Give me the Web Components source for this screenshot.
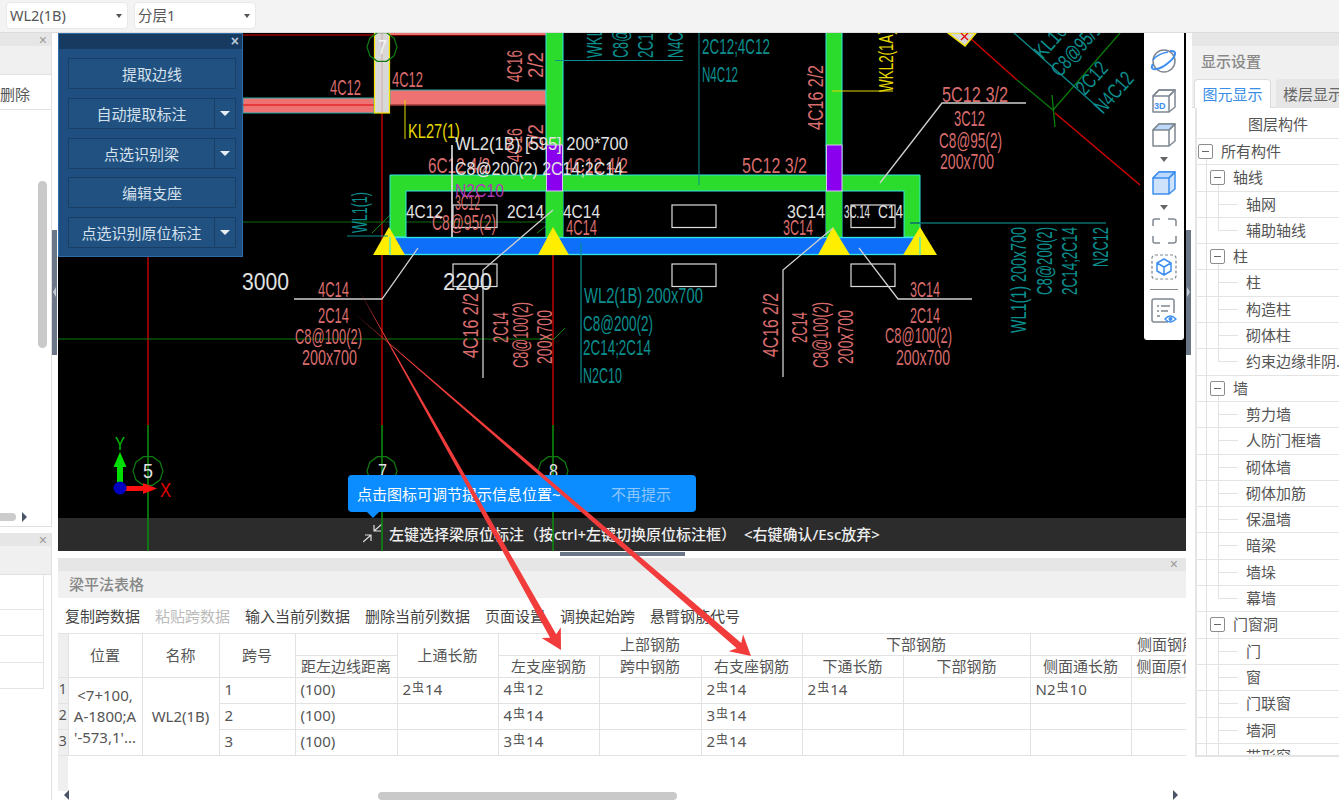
<!DOCTYPE html>
<html lang="zh">
<head>
<meta charset="utf-8">
<title>梁平法表格</title>
<style>
  html, body { margin: 0; height: 100%; overflow: hidden; background: #fff; }
  body { font: 15px/20px "Noto Sans", "Noto Sans CJK SC", sans-serif; color: #555; }
</style>
</head>
<body>
<gl-app></gl-app>
<script>
// small base: every element just sets its shadow markup from render()
class GlElement extends HTMLElement {
  constructor() {
    super();
    this.attachShadow({mode: 'open'});
    this.shadowRoot.innerHTML = this.render();
  }
}

class GlApp extends GlElement {
  render() {
    return `
      <style>
        :host { display: grid; position: relative; width: 1339px; height: 800px; overflow: hidden;
                grid-template-columns: 52px 6px 1128px 6px 147px; grid-template-rows: 33px 518px 7px 242px; }
        gl-toolbar { grid-column: 1 / -1; }
        gl-left-rail { grid-column: 1; grid-row: 2 / 5; }
        .split { grid-row: 2 / 5; position: relative; background: #fff; }
        .split i { display: block; position: absolute; left: 0; top: 197px; width: 5px; height: 125px; background: #6b7686; }
        .split i::after { content: ''; position: absolute; left: 1px; top: 57px; border: 5px solid transparent; border-left-width: 0; border-right: 3px solid #c5ccd6; }
        .split.r i::after { border-right-width: 0; border-left: 3px solid #c5ccd6; }
        .hgap { grid-column: 3; grid-row: 3; position: relative; background: #fff; }
        .hgap i { position: absolute; left: 502px; top: 1px; width: 125px; height: 4px; background: #6b7686; }
        gl-canvas { grid-column: 3; grid-row: 2; }
        gl-beam-table { grid-column: 3; grid-row: 4; }
        gl-display-panel { grid-column: 5; grid-row: 2 / 5; }
      </style>
      <gl-toolbar></gl-toolbar>
      <gl-left-rail></gl-left-rail>
      <div class="split" style="grid-column:2"><i></i></div>
      <gl-canvas>
        <gl-float-panel></gl-float-panel>
        <gl-tool-rail></gl-tool-rail>
        <gl-tip></gl-tip>
      </gl-canvas>
      <div class="hgap"><i></i></div>
      <gl-beam-table></gl-beam-table>
      <div class="split r" style="grid-column:4"><i></i></div>
      <gl-display-panel></gl-display-panel>
      <gl-arrows></gl-arrows>
    `;
  }
}

class GlToolbar extends GlElement {
  render() {
    return `
      <style>
        :host { display: flex; gap: 6px; align-items: flex-start; background: #f3f3f3; padding-top: 2px; box-sizing: border-box; border-bottom: 1px solid #ddd; }
        .sliver { width: 0; height: 27px; border-right: 1px solid #fff; margin-left: -1px; }
        .sel { width: 122px; height: 27px; box-sizing: border-box; background: #fff; border: 1px solid #e9e9e9; border-radius: 4px; font-size: 14.5px;
               display: flex; align-items: center; justify-content: space-between; padding: 0 5px 0 3px; line-height: 25px; }
        .sel i { width: 0; height: 0; border: 3.5px solid transparent; border-top: 4px solid #555; border-bottom: 0; }
      </style>
      <span class="sliver"></span>
      <div class="sel"><span>WL2(1B)</span><i></i></div>
      <div class="sel"><span>分层1</span><i></i></div>
    `;
  }
}

class GlLeftRail extends GlElement {
  render() {
    return `
      <style>
        :host { display: flex; flex-direction: column; gap: 6px; background: #fff; }
        .pane { position: relative; border-right: 1px solid #e0e0e0; border-bottom: 1px solid #e0e0e0; box-sizing: border-box; overflow: hidden; }
        .top { height: 494px; }
        .bottom { flex: 1; border-bottom: 0; }
        .head { height: 13px; background: #e6e6e6; position: relative; }
        .head b { position: absolute; right: 4px; top: 1px; font: 400 14px/13px "Liberation Sans", sans-serif; color: #999; }
        .title { height: 29px; background: #f0f0f0; border-bottom: 1px solid #e0e0e0; box-sizing: border-box; }
        .row { height: 35px; line-height: 38px; border-bottom: 1px solid #e0e0e0; box-sizing: border-box; white-space: nowrap; overflow: hidden; }
        .vbar { position: absolute; left: 38px; top: 148px; width: 9px; height: 167px; background: #c9c9c9; border-radius: 5px; }
        .hbar { position: absolute; left: 0; top: 480px; width: 16px; height: 8px; background: #ccc; border-radius: 0 4px 4px 0; }
        .arr { position: absolute; left: 22px; top: 479px; border: 5px solid transparent; border-left: 5px solid #4a5568; border-right: 0; }
        .cell { height: 26.33px; border-bottom: 1px solid #e4e4e4; border-right: 1px solid #e4e4e4; box-sizing: border-box; width: 44px; }
        .cell.first { height: 35px; }
      </style>
      <div class="pane top">
        <div class="head"><b>×</b></div>
        <div class="title"></div>
        <div class="row">删除</div>
        <div class="vbar"></div><div class="hbar"></div><div class="arr"></div>
      </div>
      <div class="pane bottom">
        <div class="head"><b>×</b></div>
        <div class="title"></div>
        <div class="cell first"></div><div class="cell"></div><div class="cell"></div><div class="cell"></div>
      </div>
    `;
  }
}

// text helper for the drawing: width is forced so the narrow CAD letters come out right
function cadText(s, x, y, w, color, h = 16, rot = 0, weight = 400) {
  const fs = (h / 0.72).toFixed(1);
  const tr = rot ? ` transform="rotate(${rot} ${x} ${y})"` : '';
  const safe = s.replace(/</g, '&lt;');
  return `<text x="${x}" y="${y}" font-size="${fs}" font-weight="${weight}" fill="${color}" textLength="${w}" lengthAdjust="spacingAndGlyphs"${tr}>${safe}</text>`;
}

function polyline(pts, color, sw = 1) {
  return `<polyline points="${pts}" fill="none" stroke="${color}" stroke-width="${sw}"/>`;
}

function octagon(cx, cy, r) {
  const pts = [];
  for (let i = 0; i < 10; i++) {
    const a = Math.PI * 2 * i / 10;
    pts.push((cx + r * Math.cos(a)).toFixed(1) + ',' + (cy + r * Math.sin(a)).toFixed(1));
  }
  return `<polygon points="${pts.join(' ')}" fill="none" stroke="#0f7a0f" stroke-width="1.2"/>`;
}

class GlCanvas extends GlElement {
  drawing() {
    const sal = '#d96c6c', teal = '#0b8e8e', wht = '#e2e2e2', ylw = '#e6d800', red = '#d00000', grn = '#0c8a0c', cy = '#35e6e6';
    let s = '';

    // axis lines
    s += polyline('148,257 148,425', '#b00000', 1.6) + polyline('148,425 148,551', grn, 1.6);
    s += polyline('382,33 382,425', '#b00000', 1.6) + polyline('382,425 382,551', grn, 1.6);
    s += polyline('553,33 553,425', '#b00000', 1.6) + polyline('553,425 553,551', grn, 1.6);
    s += polyline('58,339 553,339', '#0a7a0a', 1.2) + polyline('243,222 553,222', '#0a6a0a', 1.2);
    s += polyline('243,35 553,35', '#e00000', 1.2);
    s += polyline('372,233 393,212', grn) + polyline('537,233 560,215', grn) + polyline('553,340 565,328', grn);
    s += polyline('970,38 1017,80', red, 1.5) + polyline('1017,80 1053,110', '#0a7a0a', 1.3) + polyline('1055,113 1140,185', red, 1.5);
    s += polyline('1053,110 1120,33', '#0a7a0a', 1.3) + polyline('1052,95 1055,127', grn, 1.2);

    // beams top left
    s += `<rect x="243" y="98" width="131" height="15" fill="#ee7272" stroke="#2aa" stroke-width="1"/>`;
    s += `<rect x="390" y="90" width="156" height="15" fill="#ee7272" stroke="#2aa" stroke-width="1"/>`;
    s += `<rect x="390" y="32" width="156" height="3" fill="#ee7272"/>`;
    s += polyline('243,105 553,105', '#e00000', 1.2);
    s += `<rect x="374.5" y="30" width="15" height="83" fill="#d8d8d8" stroke="#f2e400" stroke-width="1.2"/>`;
    s += polyline('382,33 382,113', '#d8a0a0', 0.8);
    s += `<polygon points="948,33 976,33 965,46" fill="#d8d8d8" stroke="#f2e400" stroke-width="1.5"/>`;
    s += polyline('961,33 968,40', '#e00000', 1.2) + polyline('968,33 961,40', '#e00000', 1.2);

    // main green frame
    const g = '#2cdc2c';
    s += `<rect x="546" y="28" width="17" height="209" fill="${g}" stroke="${cy}" stroke-width="1"/>`;
    s += `<rect x="826" y="28" width="16" height="209" fill="${g}" stroke="${cy}" stroke-width="1"/>`;
    s += `<path d="M390 237 V175 H920 V237 H904 V191 H406 V237 Z" fill="${g}" stroke="${cy}" stroke-width="1"/>`;
    s += `<rect x="546" y="175" width="17" height="16" fill="${g}"/><rect x="826" y="191" width="16" height="46" fill="${g}"/><rect x="546" y="191" width="17" height="46" fill="${g}"/>`;
    s += `<rect x="546.5" y="145" width="16" height="46" fill="#8a00ee" stroke="#d8c8f0" stroke-width="1"/>`;
    s += `<rect x="826.5" y="145" width="15.5" height="46" fill="#8a00ee" stroke="#d8c8f0" stroke-width="1"/>`;
    s += `<rect x="390" y="237.5" width="530" height="17" fill="#0d6ffa" stroke="${cy}" stroke-width="1.3"/>`;
    for (const [a, b, c] of [[373, 389, 405], [538, 553, 569], [818, 833, 850], [903, 920, 937]]) {
      s += `<polygon points="${a},255 ${b},227 ${c},255" fill="#ffee00"/>`;
    }
    s += polyline('390,237 390,255', cy, 1.3) + polyline('920,237 920,255', cy, 1.3);

    // rectangles
    for (const [x, y] of [[672, 205], [672, 264], [453, 205], [453, 264], [851, 205], [851, 264]]) {
      s += `<rect x="${x}" y="${y}" width="44" height="22.5" fill="none" stroke="#ddd" stroke-width="1.2"/>`;
    }

    // teal leader lines
    s += polyline('555,60.5 683,60.5', teal) + polyline('699,33 699,185', teal) + polyline('347,236 388,236', teal);
    s += polyline('581,243 581,383', teal, 1.2) + polyline('910,223 1106,223', '#0a6c6c', 1.4);
    s += polyline('1013,32 1103,112', teal, 1.2);
    // yellow leaders
    s += polyline('405,100 405,139', ylw) + polyline('832,91 893,91', ylw, 1.2);

    // red rebar labels
    const r = [
      ['4C12', 330, 95, 31], ['4C12', 392, 87, 31], ['6C12 4/2', 428, 173, 62], ['4C12 4/2', 565, 173, 63],
      ['3C12', 455, 210, 25], ['C8@95(2)', 432, 230, 64], ['4C14', 566, 235, 31], ['5C12 3/2', 742, 173, 65], ['3C14', 783, 235, 30],
      ['5C12 3/2', 942, 102, 66], ['3C12', 954, 126, 31], ['C8@95(2)', 939, 148, 63], ['200x700', 940, 169, 54],
      ['3C14', 910, 297, 30], ['2C14', 910, 323, 30], ['C8@100(2)', 885, 343, 67], ['200x700', 896, 365, 54],
      ['4C14', 318, 297, 31], ['2C14', 318, 323, 31], ['C8@100(2)', 295, 344, 67], ['200x700', 302, 365, 55]
    ];
    for (const [t, x, y, w] of r) s += cadText(t, x, y, w, sal);
    const rv = [
      ['4C16', 522, 82, 32], ['2/2', 543, 78, 26], ['4C16', 522, 162, 34], ['2/2', 543, 150, 26],
      ['4C16 2/2', 823, 130, 65], ['4C16 2/2', 778, 357, 64], ['2C14', 807, 343, 31], ['C8@100(2)', 828, 368, 66], ['200x700', 853, 364, 54],
      ['4C16 2/2', 478, 358, 65], ['2C14', 508, 343, 31], ['C8@100(2)', 528, 368, 66], ['200x700', 552, 364, 54]
    ];
    for (const [t, x, y, w] of rv) s += cadText(t, x, y, w, sal, 16, -90);

    // teal notes
    const tt = [
      ['2C12;4C12', 702, 54, 68], ['N4C12', 702, 82, 36], ['WL2(1B) 200x700', 584, 303, 119],
      ['C8@200(2)', 583, 331, 70], ['2C14;2C14', 583, 355, 68], ['N2C10', 583, 383, 39]
    ];
    for (const [t, x, y, w] of tt) s += cadText(t, x, y, w, teal);
    const tv = [
      ['WKL2(1A)', 602, 58, 62], ['C8@100', 628, 58, 50], ['2C14;2C14', 653, 58, 68], ['N4C12', 683, 58, 40],
      ['WL1(1)', 367, 233, 41], ['WL1(1) 200x700', 1026, 333, 106], ['C8@200(2)', 1052, 295, 68], ['2C14;2C14', 1077, 295, 68], ['N2C12', 1108, 267, 40]
    ];
    for (const [t, x, y, w] of tv) s += cadText(t, x, y, w, teal, 16, -90);
    s += cadText('KL10', 1043, 60, 38, teal, 15, -48);
    s += cadText('C8@95/1', 1060, 78, 64, teal, 15, -48);
    s += cadText('2C12', 1085, 96, 36, teal, 15, -48);
    s += cadText('N4C12', 1103, 115, 48, teal, 15, -48);

    // yellow labels
    s += cadText('KL27(1)', 408, 138, 52, ylw, 15);
    s += cadText('WKL2(1A)', 893, 92, 62, ylw, 15, -90);

    // white leaders and picked labels
    s += polyline('294,299 382,299 418,248', '#d0d0d0', 1.3);
    s += polyline('452,145 452,237', '#e8e8e8', 1.6);
    s += polyline('553,210 483,270 483,378', '#d0d0d0', 1.3);
    s += polyline('880,183 942,103 1026,103', '#d0d0d0', 1.3);
    s += polyline('833,228 783,270 783,377', '#d0d0d0', 1.3);
    s += polyline('859,248 898,299 972,299', '#d0d0d0', 1.3);
    s += cadText('WL2(1B) [595] 200*700', 455, 150, 173, wht, 13);
    s += cadText('C8@200(2) 2C14;2C14', 455, 175, 168, wht, 13);
    s += cadText('N2C10', 455, 197, 49, '#b03ab8', 13);
    s += cadText('4C12', 406, 218, 37, wht, 13);
    s += cadText('2C14', 507, 218, 37, wht, 13);
    s += cadText('4C14', 563, 218, 37, wht, 13);
    s += cadText('3C14', 787, 218, 38, wht, 13);
    s += cadText('3C.14', 844, 218, 26, wht, 13);
    s += cadText('C14', 878, 218, 25, wht, 13);
    s += cadText('3000', 242, 290, 47, wht, 17);
    s += cadText('2200', 443, 290, 49, wht, 17);

    // axis bubbles
    s += octagon(382, 47, 15) + octagon(148, 471, 15) + octagon(382, 471, 15) + octagon(553, 471, 15);
    s += cadText('7', 378, 54, 9, '#f4f4f4', 15) + cadText('5', 143, 478, 10, wht, 15) + cadText('7', 378, 478, 9, wht, 15) + cadText('8', 549, 478, 9, wht, 15);

    // axis gizmo
    s += `<rect x="117" y="465" width="6" height="23" fill="#00dd00"/><polygon points="120,452 113.5,467 126.5,467" fill="#00dd00"/>`;
    s += `<rect x="124" y="486" width="22" height="5" fill="#ff1010"/><polygon points="157,488.5 143,483 143,494" fill="#ff1010"/>`;
    s += `<circle cx="120" cy="488" r="6.5" fill="#0000c0"/>`;
    s += cadText('Y', 115, 450, 10, '#00c000', 13) + cadText('X', 160, 497, 11, '#e00000', 14);
    return s;
  }
  render() {
    return `
      <style>
        :host { display: flex; flex-direction: column; justify-content: flex-end; position: relative; background: #000; overflow: hidden; }
        .bar { height: 33px; background: #2c2c2c; color: #eee; display: flex; align-items: center; gap: 6px; padding-left: 305px; padding-bottom: 1px; box-sizing: border-box; font-weight: 500; white-space: pre; }
        .bar svg { flex: none; }
        .draw { position: absolute; left: 0; top: 0; font-family: "Liberation Sans", Arial, sans-serif; }
      </style>
      <div class="bar">
        <svg width="20" height="20" viewBox="363 525 20 20" fill="none" stroke="#ddd" stroke-width="1.2"><path d="M382 525 L374 532 M374 526 V532 H381 M363 543 L371 536 M365 536 H371 V542"/></svg>
        <span>左键选择梁原位标注（按ctrl+左键切换原位标注框）  &lt;右键确认/Esc放弃&gt;</span>
      </div>
      <svg class="draw" width="1128" height="518" viewBox="58 33 1128 518">${this.drawing()}</svg>
      <slot></slot>
    `;
  }
}

class GlFloatPanel extends GlElement {
  render() {
    const btn = (t, split) => `<div class="btn"><span>${t}</span>${split ? '<em><i></i></em>' : ''}</div>`;
    return `
      <style>
        :host { display: flex; flex-direction: column; position: absolute; z-index: 3; left: 0; top: 0; width: 185px; height: 224px;
                box-sizing: border-box; background: #1f4f80; border: 1px solid #2f6ba6; color: #d4e0ec; }
        .title { height: 15px; background: #173a60; position: relative; flex: none; }
        .title b { position: absolute; right: 3px; top: 1px; font: 700 14px/13px "Liberation Sans", sans-serif; color: #b8c8d8; }
        .list { display: flex; flex-direction: column; gap: 8.75px; padding: 9px 6px 0 9px; }
        .btn { height: 31px; box-sizing: border-box; display: flex; background: #215180; border: 1px solid #1a3f66; line-height: 30px; text-align: center; }
        .btn span { flex: 1; }
        .btn em { width: 20px; border-left: 1px solid #1a3f66; display: flex; align-items: center; justify-content: center; }
        .btn i { width: 0; height: 0; border: 5px solid transparent; border-top: 5px solid #e8eef4; border-bottom: 0; }
      </style>
      <div class="title"><b>×</b></div>
      <div class="list">
        ${btn('提取边线')}${btn('自动提取标注', 1)}${btn('点选识别梁', 1)}${btn('编辑支座')}${btn('点选识别原位标注', 1)}
      </div>
    `;
  }
}

class GlToolRail extends GlElement {
  render() {
    const blue = '#3d8ef0', grey = '#7f8791';
    const cube = (topFill, frontFill, stroke) => `
      <path d="M2 8 L8 2 H24 V19 L18 24 H2 Z" fill="${frontFill}" stroke="${stroke}" stroke-width="1.5" stroke-linejoin="round"/>
      <path d="M2 8 L8 2 H24 L18 8 Z" fill="${topFill}" stroke="${stroke}" stroke-width="1.5" stroke-linejoin="round"/>
      <path d="M18 8 V24 M18 8 L24 2" fill="none" stroke="${stroke}" stroke-width="1.5"/>`;
    return `
      <style>
        :host { display: flex; flex-direction: column; align-items: center; position: absolute; z-index: 3; right: 2px; top: 0; width: 40px; height: 307px;
                box-sizing: border-box; background: #fff; border-radius: 0 0 3px 3px; padding-top: 15px; }
        svg { display: block; flex: none; }
        .caret { width: 0; height: 0; border: 4px solid transparent; border-top: 5px solid #666; border-bottom: 0; margin: 9px 0 8px; }
        hr { width: 28px; margin: 9px 0 8px; border: 0; border-top: 1px solid #888; }
      </style>
      <svg width="28" height="26" viewBox="0 0 28 26" fill="none">
        <circle cx="14" cy="13" r="11" stroke="${grey}" stroke-width="1.5"/>
        <path d="M3 16 C-2 24 10 22 18 15 C26 9 28 2 20 3" stroke="${blue}" stroke-width="2"/>
        <path d="M3 12 C6 8 12 5 18 4" stroke="${blue}" stroke-width="1.5"/>
      </svg>
      <svg width="26" height="26" viewBox="0 0 26 26" style="margin-top:14px">${cube('none', 'none', grey)}
        <text x="3" y="21" font-family="Liberation Sans" font-weight="700" font-size="9" fill="${blue}">3D</text>
      </svg>
      <svg width="26" height="26" viewBox="0 0 26 26" style="margin-top:8px">${cube('#bcd8fa', 'none', grey)}</svg>
      <i class="caret"></i>
      <svg width="26" height="26" viewBox="0 0 26 26">${cube('#bcd8fa', '#cfe2fb', blue)}</svg>
      <i class="caret"></i>
      <svg width="26" height="26" viewBox="0 0 26 26" fill="none" stroke="${grey}" stroke-width="1.5">
        <path d="M2 8 V3 Q2 1 4 1 H9 M17 1 H22 Q25 1 25 3 V8 M25 18 V23 Q25 25 22 25 H17 M9 25 H4 Q2 25 2 23 V18"/>
      </svg>
      <svg width="26" height="26" viewBox="0 0 26 26" fill="none" style="margin-top:10px">
        <rect x="1" y="1" width="24" height="24" rx="3" stroke="${grey}" stroke-width="1.2" stroke-dasharray="3 2"/>
        <path d="M13 5 L20 9 V17 L13 21 L6 17 V9 Z M6 9 L13 13 L20 9 M13 13 V21" stroke="${blue}" stroke-width="1.5" stroke-linejoin="round"/>
      </svg>
      <hr>
      <svg width="26" height="27" viewBox="0 0 26 27" fill="none">
        <path d="M17 24 H3 Q1 24 1 22 V3 Q1 1 3 1 H21 Q23 1 23 3 V15" stroke="${grey}" stroke-width="1.5"/>
        <path d="M6 8 H8 M10 8 H19 M6 13 H8 M10 13 H17 M6 18 H9" stroke="${grey}" stroke-width="1.3"/>
        <path d="M14 21 Q19 15 25 21 Q19 27 14 21 Z" fill="#fff" stroke="${blue}" stroke-width="1.3"/>
        <circle cx="19.5" cy="21" r="2" fill="${blue}"/>
      </svg>
    `;
  }
}

class GlTip extends GlElement {
  render() {
    return `
      <style>
        :host { display: flex; position: absolute; z-index: 3; left: 290px; top: 442px; width: 348px; height: 37px; box-sizing: border-box;
                background: #0b8cff; border-radius: 4px; color: #fff; align-items: center; padding-left: 9px; white-space: nowrap; }
        :host::after { content: ''; position: absolute; left: 19px; top: 37px; border: 6px solid transparent; border-top: 6px solid #0b8cff; border-bottom: 0; }
        span { width: 254px; }
        em { font-style: normal; color: #8cc6fa; }
      </style>
      <span>点击图标可调节提示信息位置~</span><em>不再提示</em>
    `;
  }
}

class GlBeamTable extends GlElement {
  render() {
    const rebar = '<i>虫</i>';
    const widths = [10, 74, 77, 76, 102, 101, 101, 102, 101, 101, 127, 101, 101, 72];
    const total = widths.reduce((a, b) => a + b, 0);
    return `
      <style>
        :host { display: flex; flex-direction: column; background: #fff; position: relative; overflow: hidden; }
        .strip { height: 13px; background: #e6e6e6; position: relative; flex: none; }
        .strip b { position: absolute; right: 8px; top: 0; font: 400 14px/13px "Liberation Sans", sans-serif; color: #999; }
        .title { height: 27px; line-height: 27px; background: #f0f0f0; color: #888; font-weight: 500; padding-left: 11px; flex: none; }
        .tools { height: 36px; display: flex; align-items: center; padding-left: 7px; gap: 15px; color: #444; flex: none; white-space: nowrap; border-bottom: 1px solid #e4e4e4; box-sizing: border-box; }
        .tools .off { color: #bbb; }
        .wrap { flex: 1; overflow: hidden; background: linear-gradient(90deg, #efefef 10px, #fff 10px); }
        table { border-collapse: collapse; table-layout: fixed; width: ${total}px; color: #555; }
        td, th { font-weight: 400; border: 1px solid #e2e2e2; border-width: 0 1px 1px 0; padding: 0; white-space: nowrap; overflow: hidden; box-sizing: border-box; }
        th { text-align: center; }
        .h1 th { height: 21px; line-height: 19px; padding-top: 1px; }
        .h2 th { height: 22px; line-height: 20px; }
        td { height: 26px; line-height: 22px; padding: 0 0 2px 5px; }
        td.n { padding: 0 0 2px; background: #efefef; font-size: 14px; text-align: center; }
        th.n { background: #efefef; }
        td.c { padding: 0; text-align: center; }
        td.pos { line-height: 21px; padding: 0; text-align: center; }
        i { font-style: normal; font-size: 12px; line-height: 12px; position: relative; top: -3px; margin: 0 1px; font-family: "Noto Sans CJK SC", sans-serif; }
        .scroll { height: 9px; flex: none; position: relative; }
        .scroll u { position: absolute; left: 320px; top: 1px; width: 299px; height: 8px; background: #c9c9c9; border-radius: 4px; }
        .scroll s { position: absolute; top: -1px; border: 5px solid transparent; }
        .scroll s.l { left: 6px; border-right: 5px solid #4a5568; border-left: 0; }
        .scroll s.r { left: 1115px; border-left: 5px solid #4a5568; border-right: 0; }
      </style>
      <div class="strip"><b>×</b></div>
      <div class="title">梁平法表格</div>
      <div class="tools">
        <span>复制跨数据</span><span class="off">粘贴跨数据</span><span>输入当前列数据</span><span>删除当前列数据</span><span>页面设置</span><span>调换起始跨</span><span>悬臂钢筋代号</span>
      </div>
      <div class="wrap">
        <table>
          <colgroup>${widths.map(w => `<col style="width:${w}px">`).join('')}</colgroup>
          <tr class="h1">
            <th class="n" rowspan="2"></th><th rowspan="2">位置</th><th rowspan="2">名称</th><th rowspan="2">跨号</th><th></th><th rowspan="2">上通长筋</th>
            <th colspan="3">上部钢筋</th><th colspan="2">下部钢筋</th><th colspan="3">侧面钢筋</th>
          </tr>
          <tr class="h2">
            <th>距左边线距离</th><th>左支座钢筋</th><th>跨中钢筋</th><th>右支座钢筋</th><th>下通长筋</th><th>下部钢筋</th><th>侧面通长筋</th><th>侧面原位钢筋</th><th></th>
          </tr>
          <tr>
            <td class="n">1</td><td class="pos" rowspan="3">&lt;7+100,<br>A-1800;A<br>'-573,1'...</td><td class="c" rowspan="3">WL2(1B)</td>
            <td>1</td><td>(100)</td><td>2${rebar}14</td><td>4${rebar}12</td><td></td><td>2${rebar}14</td><td>2${rebar}14</td><td></td><td>N2${rebar}10</td><td></td><td></td>
          </tr>
          <tr>
            <td class="n">2</td><td>2</td><td>(100)</td><td></td><td>4${rebar}14</td><td></td><td>3${rebar}14</td><td></td><td></td><td></td><td></td><td></td>
          </tr>
          <tr>
            <td class="n">3</td><td>3</td><td>(100)</td><td></td><td>3${rebar}14</td><td></td><td>2${rebar}14</td><td></td><td></td><td></td><td></td><td></td>
          </tr>
        </table>
      </div>
      <div class="scroll"><s class="l"></s><u></u><s class="r"></s></div>
    `;
  }
}

class GlDisplayPanel extends GlElement {
  render() {
    const rows = [
      [0, '所有构件'], [1, '轴线'], [2, '轴网'], [3, '辅助轴线'],
      [1, '柱'], [2, '柱'], [2, '构造柱'], [2, '砌体柱'], [3, '约束边缘非阴...'],
      [1, '墙'], [2, '剪力墙'], [2, '人防门框墙'], [2, '砌体墙'], [2, '砌体加筋'], [2, '保温墙'], [2, '暗梁'], [2, '墙垛'], [3, '幕墙'],
      [1, '门窗洞'], [2, '门'], [2, '窗'], [2, '门联窗'], [2, '墙洞'], [2, '带形窗']
    ];
    const html = rows.map(([lv, t]) => {
      const box = lv < 2 ? '<b></b>' : '';
      return `<div class="row l${lv}">${box}<span>${t}</span></div>`;
    }).join('');
    return `
      <style>
        :host { display: flex; flex-direction: column; background: #fff; overflow: hidden; }
        .strip { height: 13px; background: #e6e6e6; flex: none; }
        .title { height: 30px; line-height: 30px; background: #f0f0f0; color: #888; font-weight: 500; padding-left: 9px; flex: none; }
        .tabs { height: 32px; display: flex; gap: 5px; background: #f0f0f0; padding-left: 2px; flex: none; align-items: flex-end; box-sizing: border-box; border-bottom: 1px solid #ddd; }
        .tab { width: 77px; height: 29px; line-height: 28px; text-align: center; background: #fff; color: #3a8ee6; border: 1px solid #ddd; border-bottom: 0; border-radius: 4px 4px 0 0; box-sizing: border-box; flex: none; margin-bottom: -1px; white-space: nowrap; }
        .tab.off { width: 80px; background: #e6e6e6; color: #666; text-align: left; padding-left: 6px; border-color: #e6e6e6; }
        .tree { width: 147px; height: 649px; margin-left: 3px; border-left: 2px solid #e4e4e4; border-bottom: 2px solid #e4e4e4; box-sizing: border-box; overflow: hidden; flex: none; color: #555; }
        .head { height: 31px; line-height: 33px; text-align: center; width: 166px; border-bottom: 1px solid #e4e4e4; box-sizing: border-box; margin-left: -2px; }
        .row { height: 26.3px; line-height: 25px; box-sizing: border-box; border-bottom: 1px solid #e4e4e4; position: relative; white-space: nowrap; overflow: hidden;
               background-image: linear-gradient(#e2e2e2, #e2e2e2); background-size: 1px 100%; background-position: 9px 0; background-repeat: no-repeat; }
        .row span { position: absolute; top: 0; }
        .row b { position: absolute; width: 15px; height: 15px; top: 5px; box-sizing: border-box; border: 1px solid #8d8d8d; border-radius: 2px; background: linear-gradient(#666, #666) center / 7px 1px no-repeat #fff; }
        .l0 { background-image: linear-gradient(90deg, #e2e2e2, #e2e2e2); background-size: 1px 50%; background-position: 9px 100%; }
        .l0 b { left: 1px; } .l0 span { left: 24px; }
        .l1 b { left: 13px; } .l1 span { left: 36px; }
        .l2 span, .l3 span { left: 49px; }
        .l1 { background-image: linear-gradient(#e2e2e2, #e2e2e2), linear-gradient(#e2e2e2, #e2e2e2); background-size: 1px 100%, 1px 50%; background-position: 9px 0, 21px 100%; }
        .l2 { background-image: linear-gradient(#e2e2e2, #e2e2e2), linear-gradient(#e2e2e2, #e2e2e2), linear-gradient(#e2e2e2, #e2e2e2); background-size: 1px 100%, 1px 100%, 20px 1px; background-position: 9px 0, 21px 0, 21px 12px; }
        .l3 { background-image: linear-gradient(#e2e2e2, #e2e2e2), linear-gradient(#e2e2e2, #e2e2e2), linear-gradient(#e2e2e2, #e2e2e2); background-size: 1px 100%, 1px 50%, 20px 1px; background-position: 9px 0, 21px 0, 21px 12px; }
      </style>
      <div class="strip"></div>
      <div class="title">显示设置</div>
      <div class="tabs"><div class="tab">图元显示</div><div class="tab off">楼层显示</div></div>
      <div class="tree">
        <div class="head">图层构件</div>
        ${html}
      </div>
    `;
  }
}

class GlArrows extends GlElement {
  render() {
    // hand drawn annotation: thin tail, thicker toward the head
    const arrow = (x0, y0, x1, y1, w) => {
      const dx = x1 - x0, dy = y1 - y0, len = Math.hypot(dx, dy);
      const ux = dx / len, uy = dy / len, nx = -uy, ny = ux;
      const p = (along, side) => (x1 - ux * along + nx * side).toFixed(1) + ',' + (y1 - uy * along + ny * side).toFixed(1);
      return `<polygon fill="#f23c3c" points="${x0},${y0} ${p(16, w / 2)} ${p(20, 11)} ${x1},${y1} ${p(20, -11)} ${p(16, -w / 2)}"/>`;
    };
    return `
      <style>
        :host { display: block; position: absolute; left: 0; top: 0; width: 1339px; height: 800px; z-index: 5; pointer-events: none; }
      </style>
      <svg width="1339" height="800">${arrow(359, 290, 561, 650, 7)}${arrow(354, 313, 751, 656, 7)}</svg>
    `;
  }
}

customElements.define('gl-toolbar', GlToolbar);
customElements.define('gl-left-rail', GlLeftRail);
customElements.define('gl-canvas', GlCanvas);
customElements.define('gl-float-panel', GlFloatPanel);
customElements.define('gl-tool-rail', GlToolRail);
customElements.define('gl-tip', GlTip);
customElements.define('gl-beam-table', GlBeamTable);
customElements.define('gl-display-panel', GlDisplayPanel);
customElements.define('gl-arrows', GlArrows);
customElements.define('gl-app', GlApp);
</script>
</body>
</html>
